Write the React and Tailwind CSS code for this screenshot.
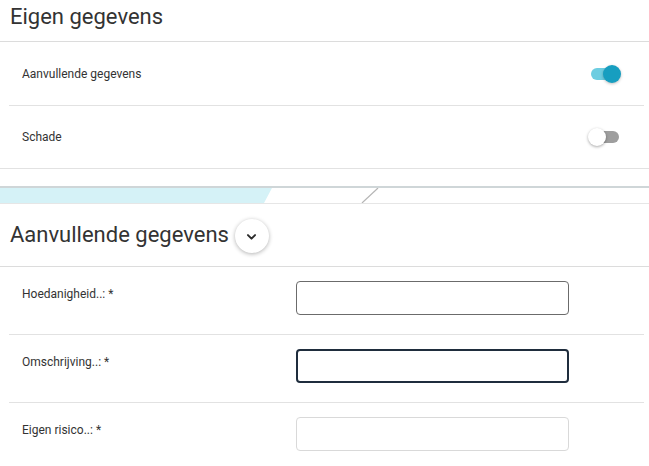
import React, { useState } from 'react';

const Toggle = ({ on, onChange }) => (
  <button
    type="button"
    onClick={onChange}
    className="relative w-[33px] h-[20px] shrink-0"
  >
    <span
      className={`absolute left-[3px] right-[2px] top-[4px] h-[12px] rounded-full ${on ? 'bg-[#6dcde1]' : 'bg-[#9e9e9e]'}`}
    />
    <span
      className={`absolute top-[1px] w-[18px] h-[18px] rounded-full ${on ? 'left-[15px] bg-[#179ec0] shadow-[0_1px_3px_rgba(0,0,0,0.25)]' : 'left-0 bg-white shadow-[0_1px_3px_rgba(0,0,0,0.35)]'}`}
    />
  </button>
);

const ToggleRow = ({ label, on, onChange, last }) => (
  <div className={`flex items-center justify-between pl-[13px] pr-[23px] ${last ? 'h-[62px]' : 'h-[64px] border-b border-[#e2e2e2]'}`}>
    <span className="text-[12px] text-[#333]">{label}</span>
    <Toggle on={on} onChange={onChange} />
  </div>
);

const FieldRow = ({ label, variant, last }) => {
  const border = {
    normal: 'border border-[#6b6b6b]',
    focus: 'border-2 border-[#1f2d3d]',
    light: 'border border-[#d9d9d9]',
  }[variant];
  return (
    <div className={`ml-[9px] mr-[5px] flex pt-[14px] pb-[19px] ${last ? '' : 'border-b border-[#e2e2e2]'}`}>
      <div className="w-[287px] pl-[13px] pt-[3px] text-[12px] leading-[20px] text-[#333]">{label}</div>
      <input className={`w-[273px] h-[34px] rounded-[4px] bg-white outline-none ${border}`} />
    </div>
  );
};

export default function App() {
  const [extra, setExtra] = useState(true);
  const [schade, setSchade] = useState(false);

  return (
    <div className="w-[649px] h-[466px] overflow-hidden bg-white font-['Roboto',sans-serif]">
      <div className="h-[42px] border-b border-[#dcdcdc] pl-[10px] flex items-center">
        <h1 className="text-[22px] leading-none text-[#333] -mt-[7px]">Eigen gegevens</h1>
      </div>
      <div className="ml-[9px] mr-[5px]">
        <ToggleRow label="Aanvullende gegevens" on={extra} onChange={() => setExtra(!extra)} />
        <ToggleRow label="Schade" on={schade} onChange={() => setSchade(!schade)} last />
      </div>
      <div className="border-b border-[#e2e2e2]" />

      <div className="h-[17px]" />
      <div className="border-t-2 border-[#cfd6d8] border-b border-b-[#e6e6e6] h-[18px]">
        <svg width="649" height="15" viewBox="0 0 649 15" preserveAspectRatio="none" className="block">
          <polygon points="0,0 272,0 264,15 0,15" fill="#d5f2f7" />
          <line x1="378" y1="0" x2="362" y2="15" stroke="#b5b5b5" strokeWidth="1.2" />
        </svg>
      </div>

      <div className="h-[63px] border-b border-[#dcdcdc] pl-[10px] flex items-center gap-[6px]">
        <h2 className="text-[22px] leading-none text-[#333]">Aanvullende gegevens</h2>
        <button
          type="button"
          className="w-[34px] h-[34px] rounded-full bg-white shadow-[0_1px_4px_rgba(0,0,0,0.3)] flex items-center justify-center mt-[2px]"
        >
          <svg width="17" height="17" viewBox="0 0 24 24" fill="none" stroke="#2b2b2b" strokeWidth="2.8" strokeLinecap="round" strokeLinejoin="round">
            <path d="M7 10l5 5 5-5" />
          </svg>
        </button>
      </div>

      <FieldRow label="Hoedanigheid..: *" variant="normal" />
      <FieldRow label="Omschrijving..: *" variant="focus" />
      <FieldRow label="Eigen risico..: *" variant="light" last />
    </div>
  );
}
